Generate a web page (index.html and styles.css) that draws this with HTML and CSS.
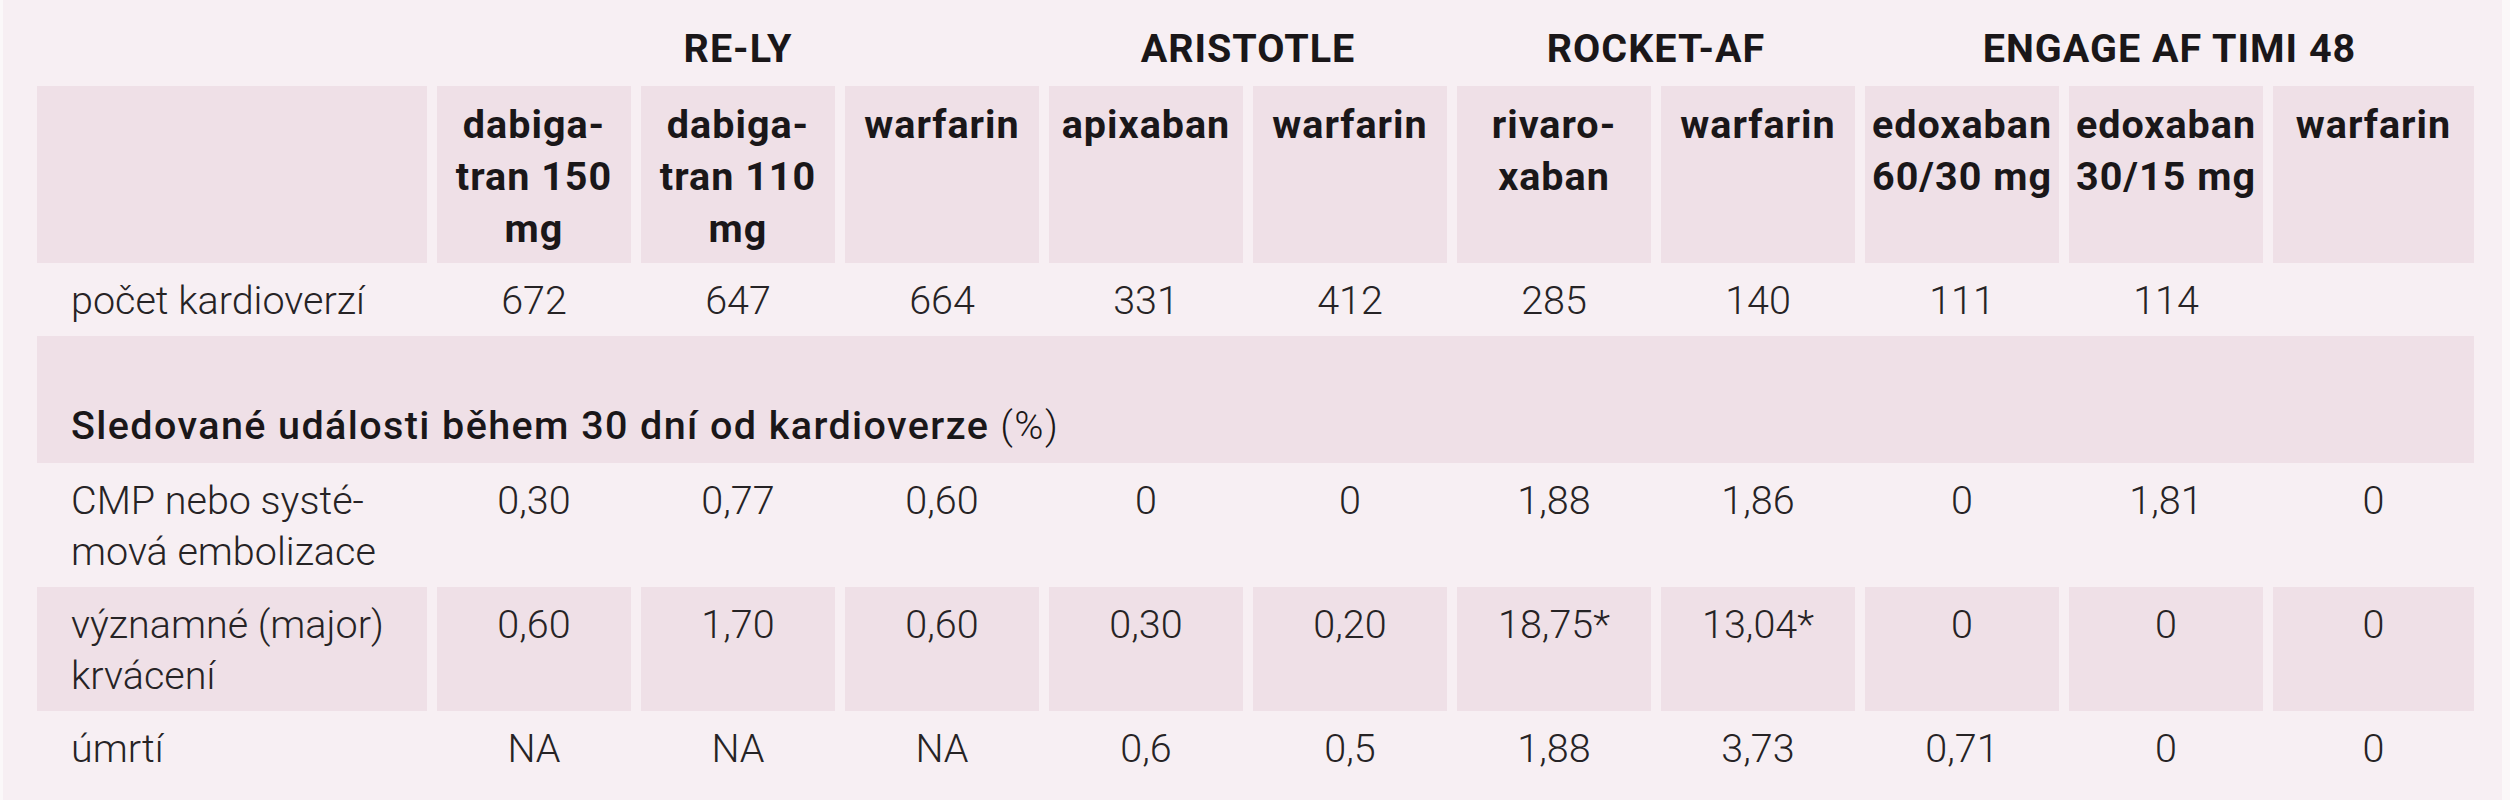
FILE: index.html
```html
<!DOCTYPE html>
<html lang="cs">
<head>
<meta charset="utf-8">
<title>Kardioverze</title>
<link rel="stylesheet" href="styles.css">
</head>
<body>
<div class="panel">
  <div class="table">
    <div class="grp"></div>
    <div class="grp span3">RE-LY</div>
    <div class="grp span2">ARISTOTLE</div>
    <div class="grp span2">ROCKET-AF</div>
    <div class="grp span3">ENGAGE AF TIMI 48</div>

    <div class="hd"></div>
    <div class="hd">dabiga-<br>tran 150<br>mg</div>
    <div class="hd">dabiga-<br>tran 110<br>mg</div>
    <div class="hd">warfarin</div>
    <div class="hd">apixaban</div>
    <div class="hd">warfarin</div>
    <div class="hd">rivaro-<br>xaban</div>
    <div class="hd">warfarin</div>
    <div class="hd">edoxaban<br>60/30 mg</div>
    <div class="hd">edoxaban<br>30/15 mg</div>
    <div class="hd">warfarin</div>

    <div class="c lbl">počet kardioverzí</div>
    <div class="c">672</div>
    <div class="c">647</div>
    <div class="c">664</div>
    <div class="c">331</div>
    <div class="c">412</div>
    <div class="c">285</div>
    <div class="c">140</div>
    <div class="c">111</div>
    <div class="c">114</div>
    <div class="c"></div>

    <div class="sec"><span class="sec-b">Sledované události během 30 dní od kardioverze</span> (%)</div>

    <div class="c lbl">CMP nebo systé-<br>mová embolizace</div>
    <div class="c">0,30</div>
    <div class="c">0,77</div>
    <div class="c">0,60</div>
    <div class="c">0</div>
    <div class="c">0</div>
    <div class="c">1,88</div>
    <div class="c">1,86</div>
    <div class="c">0</div>
    <div class="c">1,81</div>
    <div class="c">0</div>

    <div class="c lbl sh">významné (major)<br>krvácení</div>
    <div class="c sh">0,60</div>
    <div class="c sh">1,70</div>
    <div class="c sh">0,60</div>
    <div class="c sh">0,30</div>
    <div class="c sh">0,20</div>
    <div class="c sh">18,75*</div>
    <div class="c sh">13,04*</div>
    <div class="c sh">0</div>
    <div class="c sh">0</div>
    <div class="c sh">0</div>

    <div class="c lbl">úmrtí</div>
    <div class="c">NA</div>
    <div class="c">NA</div>
    <div class="c">NA</div>
    <div class="c">0,6</div>
    <div class="c">0,5</div>
    <div class="c">1,88</div>
    <div class="c">3,73</div>
    <div class="c">0,71</div>
    <div class="c">0</div>
    <div class="c">0</div>
  </div>
</div>
</body>
</html>
```

FILE: styles.css
```css
html, body {
  margin: 0;
  padding: 0;
  background: #fbf8f9;
}

body {
  font-family: Roboto, "Liberation Sans", sans-serif;
  font-size: 39.5px;
  font-weight: 300;
  color: #262325;
}

.panel {
  margin-left: 3px;
  width: 2499px;
  height: 800px;
  background: #f7eff3;
  overflow: hidden;
}

.table {
  margin-left: 34px;
  display: grid;
  grid-template-columns: 390px repeat(9, 194px) 201px;
  column-gap: 10px;
  row-gap: 0;
}

.grp {
  padding: 23px 0 12px;
  line-height: 51px;
  height: 51px;
  text-align: center;
  font-weight: 700;
  letter-spacing: 1px;
  color: #1a1719;
  white-space: nowrap;
}

.span3 { grid-column: span 3; }
.span2 { grid-column: span 2; }

.hd {
  background: #efe0e7;
  padding: 13px 0 8px;
  line-height: 52px;
  text-align: center;
  font-weight: 700;
  letter-spacing: 1px;
  color: #1a1719;
  white-space: nowrap;
}

.c {
  padding: 12px 0 10px;
  line-height: 51px;
  min-height: 51px;
  text-align: center;
  white-space: nowrap;
}

.c.lbl {
  text-align: left;
  padding-left: 34px;
}

.sh {
  background: #efe0e7;
}

.sec {
  grid-column: 1 / -1;
  background: #efe0e7;
  padding: 64px 0 12px 34px;
  line-height: 51px;
  white-space: nowrap;
  letter-spacing: 1.4px;
  color: #1a1719;
}

.sec-b {
  font-weight: 500;
}
```
